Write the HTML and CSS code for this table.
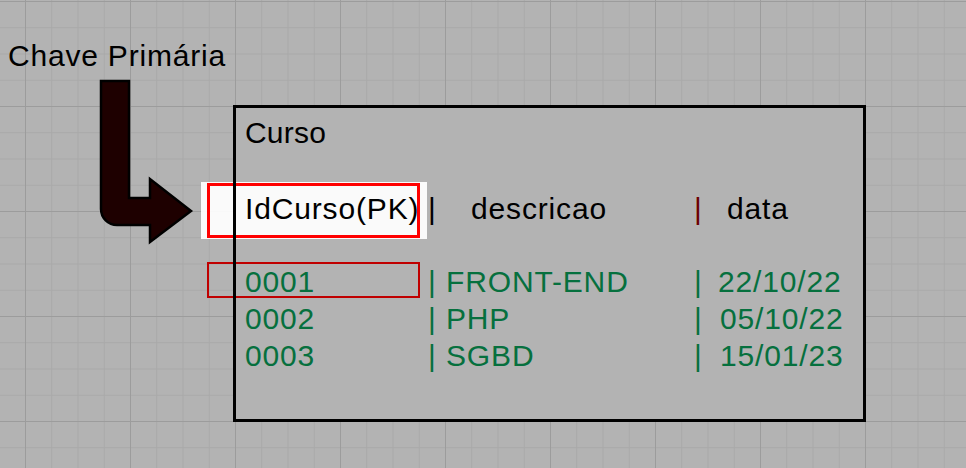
FILE: index.html
```html
<!DOCTYPE html>
<html lang="pt">
<head>
<meta charset="utf-8">
<title>Chave Primária</title>
<link rel="stylesheet" href="styles.css">
</head>
<body>
<div class="canvas">
  <div class="label">Chave Primária</div>
  <svg class="arrow" width="105" height="175" viewBox="95 75 105 175" aria-hidden="true">
    <path d="M101,81 H129 V198 H150 V179 L191,211 L150,242 V225 H117 A16,16 0 0 1 101,209 Z" fill="#1e0000" stroke="#000" stroke-width="2.5" stroke-linejoin="miter"/>
  </svg>
  <div class="table-box">
    <div class="hl-white"></div>
    <div class="hl-red"></div>
    <div class="hl-row"></div>
    <div class="title">Curso</div>
    <div class="grid head">
      <span>IdCurso(PK)</span>
      <span class="pipe">|</span>
      <span class="col2-head">descricao</span>
      <span class="pipe pipe-red">|</span>
      <span class="col3-head">data</span>
    </div>
    <div class="grid rows">
      <span>0001</span><span class="pipe">|</span><span>FRONT-END</span><span class="pipe">|</span><span>22/10/22</span>
      <span>0002</span><span class="pipe">|</span><span>PHP</span><span class="pipe">|</span><span class="d2">05/10/22</span>
      <span>0003</span><span class="pipe">|</span><span>SGBD</span><span class="pipe">|</span><span class="d2">15/01/23</span>
    </div>
  </div>
</div>
</body>
</html>
```
FILE: styles.css
```css
html, body {
  margin: 0;
  padding: 0;
}
body {
  font-family: "Liberation Sans", Arial, Helvetica, sans-serif;
  color: #000;
}
.canvas {
  position: relative;
  width: 966px;
  height: 468px;
  overflow: hidden;
  background-color: #b3b3b3;
  background-image:
    linear-gradient(to right, #9c9c9c 1px, transparent 1px),
    linear-gradient(to bottom, #9c9c9c 1px, transparent 1px),
    linear-gradient(to right, #a9a9a9 1px, transparent 1px),
    linear-gradient(to bottom, #a9a9a9 1px, transparent 1px);
  background-size: 105px 105px, 105px 105px, 26.25px 26.25px, 26.25px 26.25px;
  background-position: 25px 1px, 25px 1px, 25px 1px, 25px 1px;
}
.label {
  position: absolute;
  left: 8px;
  top: 37px;
  font-size: 30px;
  line-height: 37px;
  letter-spacing: 0.8px;
  white-space: nowrap;
}
.arrow {
  position: absolute;
  left: 95px;
  top: 75px;
  overflow: visible;
}
.table-box {
  position: absolute;
  left: 233px;
  top: 105px;
  width: 633px;
  height: 317px;
  box-sizing: border-box;
  background: #b3b3b3;
  padding: 9px 0 0 12px;
  font-size: 30px;
  line-height: 37px;
  letter-spacing: 0.85px;
}
.table-box::after {
  content: "";
  position: absolute;
  inset: 0;
  border: 3px solid #000;
  z-index: 3;
  pointer-events: none;
}
.hl-white {
  position: absolute;
  left: -32px;
  top: 77px;
  width: 226px;
  height: 57px;
  background: rgba(255, 255, 255, 0.93);
}
.hl-red {
  position: absolute;
  left: -26px;
  top: 78px;
  width: 213px;
  height: 55px;
  box-sizing: border-box;
  border: 3px solid #ff0000;
  z-index: 2;
}
.hl-row {
  position: absolute;
  left: -26px;
  top: 157px;
  width: 213px;
  height: 36px;
  box-sizing: border-box;
  border: 2px solid #c00000;
  z-index: 2;
}
.title {
  position: relative;
  letter-spacing: 0.2px;
  margin-bottom: 39px;
}
.grid {
  position: relative;
  z-index: 1;
  display: grid;
  grid-template-columns: 183px 18px 248px 24px 1fr;
  white-space: nowrap;
}
.head {
  margin-bottom: 36px;
}
.col2-head {
  padding-left: 25px;
}
.col3-head {
  padding-left: 9px;
}
.pipe {
  letter-spacing: 0;
}
.pipe-red {
  color: #6b0000;
}
.rows {
  color: #06703e;
}
.d2 {
  padding-left: 2px;
}
```
